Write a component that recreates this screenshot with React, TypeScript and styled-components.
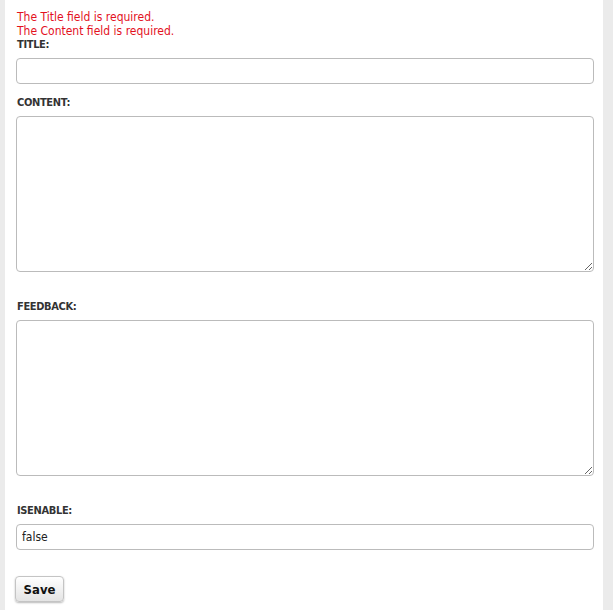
import React from "react";
import styled, { createGlobalStyle } from "styled-components";

const Global = createGlobalStyle`
  html, body { margin: 0; padding: 0; background: #ffffff; }
  body { font-family: "DejaVu Sans Condensed", "DejaVu Sans", sans-serif; }
`;

const Page = styled.div`
  display: flex;
  min-height: 610px;
  background: #ffffff;
`;

const SideStrip = styled.div<{ $w: number }>`
  width: ${(p) => p.$w}px;
  flex: none;
  background: #ebebeb;
`;

const Main = styled.form`
  flex: 1;
  padding: 10px 9px 0 11px;
  display: flex;
  flex-direction: column;
  align-items: stretch;
`;

const Errors = styled.ul`
  list-style: none;
  margin: 0;
  padding: 0 0 0 1px;
`;

const ErrorItem = styled.li`
  color: #e3111e;
  font-size: 12px;
  line-height: 14px;
  height: 14px;
`;

const Field = styled.div<{ $gap: number }>`
  display: flex;
  flex-direction: column;
  margin-top: ${(p) => p.$gap}px;
`;

const Label = styled.label`
  display: block;
  font-size: 11px;
  font-weight: bold;
  letter-spacing: -0.35px;
  color: #333333;
  line-height: 14px;
  height: 14px;
  padding-left: 1px;
  margin-bottom: 6px;
`;

const TextInput = styled.input`
  box-sizing: border-box;
  width: 100%;
  height: 26px;
  border: 1px solid #bbbbbb;
  border-radius: 4px;
  padding: 0 5px;
  font-family: "DejaVu Sans Condensed", "DejaVu Sans", sans-serif;
  font-size: 12px;
  color: #222222;
  background: #ffffff;
  outline: none;
`;

const TextArea = styled.textarea`
  box-sizing: border-box;
  display: block;
  width: 100%;
  height: 156px;
  border: 1px solid #bbbbbb;
  border-radius: 4px;
  padding: 4px 5px;
  font-family: "DejaVu Sans Condensed", "DejaVu Sans", sans-serif;
  font-size: 12px;
  background: #ffffff;
  outline: none;
`;

const Actions = styled.div`
  margin-top: 26px;
  margin-left: -1px;
  display: flex;
`;

const SaveButton = styled.button`
  box-sizing: border-box;
  width: 49px;
  height: 26px;
  padding: 0;
  border: 1px solid #c4c4c4;
  border-radius: 4px;
  background: linear-gradient(#ffffff, #e4e4e4);
  box-shadow: 0 1px 2px rgba(0, 0, 0, 0.28);
  font-family: "DejaVu Sans Condensed", "DejaVu Sans", sans-serif;
  font-size: 13px;
  font-weight: bold;
  color: #111111;
  cursor: pointer;
`;

export default function App() {
  return (
    <>
      <Global />
      <Page>
        <SideStrip $w={5} />
        <Main onSubmit={(e) => e.preventDefault()}>
          <Errors>
            <ErrorItem>The Title field is required.</ErrorItem>
            <ErrorItem>The Content field is required.</ErrorItem>
          </Errors>
          <Field $gap={0}>
            <Label>TITLE:</Label>
            <TextInput defaultValue="" />
          </Field>
          <Field $gap={12}>
            <Label>CONTENT:</Label>
            <TextArea />
          </Field>
          <Field $gap={28}>
            <Label>FEEDBACK:</Label>
            <TextArea />
          </Field>
          <Field $gap={28}>
            <Label>ISENABLE:</Label>
            <TextInput defaultValue="false" />
          </Field>
          <Actions>
            <SaveButton type="submit">Save</SaveButton>
          </Actions>
        </Main>
        <SideStrip $w={10} />
      </Page>
    </>
  );
}
